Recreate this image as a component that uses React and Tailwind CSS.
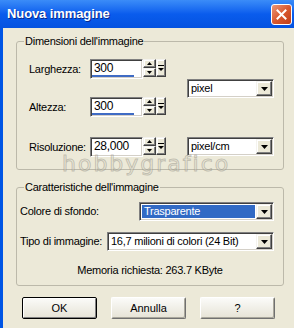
import React from "react";

const sunken =
  "border border-t-[#808080] border-l-[#808080] border-r-white border-b-white shadow-[inset_1px_1px_0_#404040,inset_-1px_-1px_0_#d4d0c8]";
const raised =
  "bg-[#ece9d8] border border-t-[#f4f3ee] border-l-[#f4f3ee] border-r-[#404040] border-b-[#404040] shadow-[inset_-1px_-1px_0_#808080,inset_1px_1px_0_#ffffff]";

function Tri({ up = false }) {
  return (
    <svg width="7" height="4" viewBox="0 0 7 4">
      {up ? <path d="M3.5 0 L7 4 L0 4 Z" fill="#000" /> : <path d="M0 0 L7 0 L3.5 4 Z" fill="#000" />}
    </svg>
  );
}

function SmallTri({ up = false }) {
  return (
    <svg width="5" height="3" viewBox="0 0 5 3">
      {up ? <path d="M2.5 0 L5 3 L0 3 Z" fill="#000" /> : <path d="M0 0 L5 0 L2.5 3 Z" fill="#000" />}
    </svg>
  );
}

function Spin() {
  return (
    <div className="flex h-[18px]">
      <div className="flex flex-col w-[13px]">
        <div className={`${raised} h-[9px] flex items-center justify-center`}>
          <SmallTri up />
        </div>
        <div className={`${raised} h-[9px] flex items-center justify-center`}>
          <SmallTri />
        </div>
      </div>
      <div className={`${raised} w-[10px] h-[18px] flex items-center justify-center`}>
        <svg width="6" height="7" viewBox="0 0 6 7">
          <rect x="0" y="0" width="6" height="1" fill="#000" />
          <path d="M0 3 L6 3 L3 6 Z" fill="#000" />
        </svg>
      </div>
    </div>
  );
}

function NumInput({ value, bar = false }) {
  return (
    <div className="flex items-start">
      <div className={`${sunken} bg-white w-[53px] h-[20px] p-[1px] flex flex-col justify-between`}>
        <span className="pl-[2px] text-[12px] leading-[14px] text-black tracking-[-0.3px]">{value}</span>
        {bar ? <div className="h-[2px] w-[42px] bg-[#3f6bc4]" /> : <div className="h-[2px]" />}
      </div>
      <Spin />
    </div>
  );
}

function Combo({ value, width, selected = false }) {
  return (
    <div className={`${sunken} bg-white h-[19px] p-[1px] flex`} style={{ width }}>
      <div
        className={`flex-1 flex items-center pl-[2px] text-[11px] tracking-[-0.25px] ${
          selected ? "bg-[#316ac5] text-white my-[1px] ml-[1px] mr-[1px]" : "text-black"
        }`}
      >
        {value}
      </div>
      <div className={`${raised} w-[16px] h-[15px] flex items-center justify-center`}>
        <Tri />
      </div>
    </div>
  );
}

function Btn({ children, def = false }) {
  return (
    <div
      className={`w-[75px] h-[22px] flex items-center justify-center text-[11px] text-black rounded-[2px] bg-gradient-to-b from-[#fbfbf9] to-[#e6e3d6] border ${
        def
          ? "border-black shadow-[inset_1px_1px_0_#ffffff,inset_-1px_-1px_0_#808080]"
          : "border-t-white border-l-white border-r-[#707070] border-b-[#707070] shadow-[inset_-1px_-1px_0_#a9a79c]"
      }`}
    >
      {children}
    </div>
  );
}

export default function App() {
  return (
    <div
      className="w-[294px] h-[328px] bg-[#ece9d8] flex flex-col overflow-hidden relative text-black"
      style={{ fontFamily: '"Liberation Sans", Arial, sans-serif' }}
    >
      {/* Title bar */}
      <div className="h-[28px] shrink-0 flex items-center justify-between pl-[7px] pr-[2px] bg-gradient-to-b from-[#3b8cf8] via-[#0a5ced] to-[#0452e0]">
        <span className="text-white font-bold text-[13px] tracking-[-0.1px] [text-shadow:1px_1px_0_#0a2a8c]">
          Nuova immagine
        </span>
        <div className="w-[21px] h-[21px] rounded-[3px] border border-white bg-gradient-to-br from-[#eb9677] via-[#d9592f] to-[#c13d17] flex items-center justify-center">
          <svg width="11" height="11" viewBox="0 0 11 11">
            <path d="M1.5 1.5 L9.5 9.5 M9.5 1.5 L1.5 9.5" stroke="#fff" strokeWidth="2" strokeLinecap="square" />
          </svg>
        </div>
      </div>

      {/* Body */}
      <div className="flex-1 border-l-[3px] border-[#0055e5] pl-[13px] pr-[10px] flex flex-col">
        {/* Group 1 */}
        <fieldset className="mt-[7px] border border-[#bcb9aa] rounded-[3px]">
          <legend className="ml-[7px] px-[1px] text-[11px] leading-[13px] tracking-[-0.25px]">
            Dimensioni dell'immagine
          </legend>
          <div className="flex pt-[11px] pb-[12px] pl-[12px]">
            <div className="flex flex-col">
              <div className="flex items-center h-[20px]">
                <span className="w-[61px] text-[11px] tracking-[-0.25px]">Larghezza:</span>
                <NumInput value="300" bar />
              </div>
              <div className="flex items-center h-[20px] mt-[18px]">
                <span className="w-[61px] text-[11px] tracking-[-0.25px]">Altezza:</span>
                <NumInput value="300" bar />
              </div>
              <div className="flex items-center h-[20px] mt-[20px]">
                <span className="w-[61px] text-[11px] tracking-[-0.25px]">Risoluzione:</span>
                <NumInput value="28,000" />
              </div>
            </div>
            <div className="flex flex-col ml-[21px] pt-[20px]">
              <Combo value="pixel" width={87} />
              <div className="mt-[39px]">
                <Combo value="pixel/cm" width={87} />
              </div>
            </div>
          </div>
        </fieldset>

        {/* Group 2 */}
        <fieldset className="mt-[11px] border border-[#bcb9aa] rounded-[3px]">
          <legend className="ml-[7px] px-[1px] text-[11px] leading-[13px] tracking-[-0.25px]">
            Caratteristiche dell'immagine
          </legend>
          <div className="flex flex-col pt-[8px] pb-[8px] pl-[3px]">
            <div className="flex items-center">
              <span className="w-[119px] text-[11px] tracking-[-0.25px]">Colore di sfondo:</span>
              <Combo value="Trasparente" width={135} selected />
            </div>
            <div className="flex items-center mt-[11px]">
              <span className="w-[87px] text-[11px] tracking-[-0.25px]">Tipo di immagine:</span>
              <Combo value="16,7 milioni di colori (24 Bit)" width={167} />
            </div>
            <div className="mt-[13px] text-center text-[11px] leading-[13px] tracking-[-0.25px] pr-[3px]">
              Memoria richiesta: 263.7 KByte
            </div>
          </div>
        </fieldset>

        {/* Buttons */}
        <div className="flex mt-[11px] ml-[6px] gap-[14px]">
          <Btn def>OK</Btn>
          <Btn>Annulla</Btn>
          <Btn>?</Btn>
        </div>
      </div>

      {/* Watermark */}
      <div
        className="absolute left-[62px] top-[153px] pointer-events-none text-[22px] leading-[22px] tracking-[2px] text-[rgba(236,233,216,0.35)] [-webkit-text-stroke:1px_rgba(140,137,128,0.45)]"
        style={{ fontFamily: '"DejaVu Sans", sans-serif' }}
      >
        hobbygrafico
      </div>
    </div>
  );
}
